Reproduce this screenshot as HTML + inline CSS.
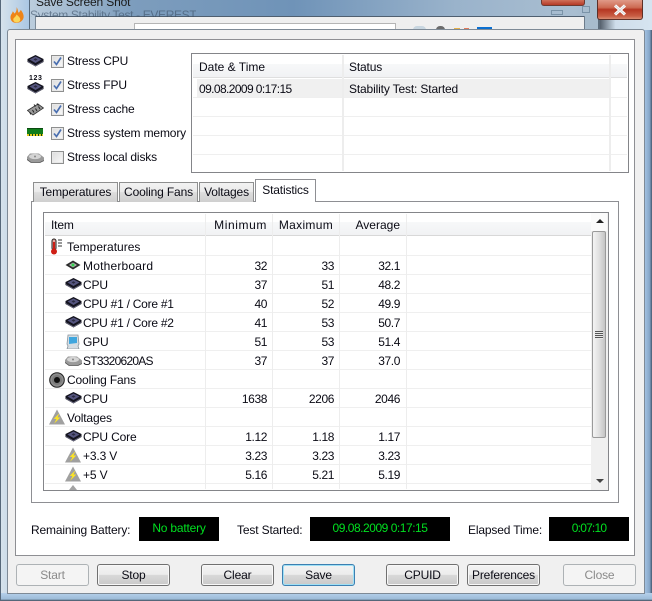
<!DOCTYPE html>
<html><head><meta charset="utf-8">
<style>
html,body{margin:0;padding:0;background:#000}
#r{position:relative;width:652px;height:601px;overflow:hidden;font-family:"Liberation Sans",sans-serif;font-size:12px;letter-spacing:-.15px;color:#0a0a14;background:#b9cfe4}
#r div,#r span.t,#r svg.i{position:absolute}
.t{white-space:nowrap;line-height:14px}
.r{text-align:right;letter-spacing:-.4px}
.hl{background:#f0f0f0}
.b{box-sizing:border-box;border:1px solid #707070;border-radius:3px;background:linear-gradient(#f3f3f3 0,#ececec 48%,#d9d9d9 50%,#c9c9c9 100%);text-align:center;line-height:20px;top:564px;height:22px;width:73px;box-shadow:inset 0 0 0 1px #f8f8f8}
.d{border-color:#adb2b5;background:#f4f4f4;color:#8a8a8a;box-shadow:none}
.tab{box-sizing:border-box;top:182px;height:20px;border:1px solid #8e8f8f;background:linear-gradient(#f2f2f2,#ebebeb 45%,#dddddd 50%,#cfcfcf);text-align:center;line-height:19px;border-bottom:0}
.blk{background:#000;color:#00e020;text-align:center;top:517px;height:24px;line-height:23px}
.cb{box-sizing:border-box;left:51px;width:13px;height:13px;border:1px solid #8e8f8f;background:linear-gradient(135deg,#dcdcdc,#fafafa);box-shadow:inset 0 0 0 1px #e8e8e8}
</style></head><body>
<div id="r">
<svg width="0" height="0" style="position:absolute"><defs>
<symbol id="cpu" viewBox="0 0 17 13"><path d="M8.500 1 16.500 5v3L8.500 12.500.5 8V5z" fill="#14141f"/><path d="M8.500 2.500 14.500 5.500 8.500 9 2.500 5.500z" fill="#55557f"/><path d="M6.500 5.500 8.500 4.300 10.500 5.500 8.500 6.800z" fill="#2a2a40"/><path d="M1 7.500l7.500 4.300L16 7.500" stroke="#75758f" fill="none" stroke-width=".7"/></symbol>
<symbol id="tri" viewBox="0 0 17 16"><path d="M8.500 0 17 16H0z" fill="#a0a0a0"/><path d="M11 4 5 10h3L5.500 15 12 8.500H9z" fill="#ffe620"/></symbol>
<symbol id="hdd" viewBox="0 0 17 10"><path d="M3 .5h9l5 4v2.500L13 9.500H4L0 6.500V4z" fill="#9a9a9a"/><ellipse cx="8" cy="3.500" rx="6" ry="2.600" fill="#d4d4d4"/><circle cx="8" cy="3.500" r="1" fill="#888"/><path d="M0 6.500l4 3h9l4-2" stroke="#555" fill="none" stroke-width=".8"/></symbol>
</defs></svg>

<!-- glass background -->
<div style="left:0;top:0;width:652px;height:30px;background:linear-gradient(90deg,#b9c9d8 0,#c2d2e0 3%,#7d9dbd 20%,#6f93b8 45%,#9ab3cb 70%,#a9bed1 88%,#9eb0c2 100%)"></div>
<div style="left:0;top:0;width:30px;height:601px;background:linear-gradient(90deg,#d7e3ec,#a9c6e3)"></div>
<div style="left:644px;top:0;width:8px;height:601px;background:linear-gradient(90deg,#a7c6e6,#85a6c8 70%,#44586e)"></div>
<div style="left:0;top:593px;width:652px;height:8px;background:linear-gradient(#b5d0ea,#9dbcd8 75%,#3d4b5a)"></div>
<div style="left:0;top:0;width:1px;height:601px;background:#56687a"></div>
<!-- back window -->
<div style="left:29px;top:0;width:1px;height:30px;background:#55697d"></div>
<div style="left:585px;top:0;width:13px;height:30px;background:#a7bccd"></div>
<div style="left:598px;top:0;width:2px;height:30px;background:#5c6d7c"></div>
<div style="left:600px;top:0;width:52px;height:30px;background:linear-gradient(90deg,#55606c,#cfdeeb 30%,#d6e4f0)"></div>
<div style="left:35px;top:16px;width:550px;height:14px;background:#efefef;border-top:1px solid #4f5f70;border-left:1px solid #7c8a98;box-sizing:border-box"></div>
<div style="left:584px;top:16px;width:1px;height:14px;background:#6d7c8b"></div>
<div style="left:134px;top:23px;width:262px;height:7px;background:#fff;border:1px solid #b5b5b5;border-bottom:0;box-sizing:border-box"></div>
<div style="left:413px;top:26px;width:13px;height:4px;background:#c8d6e0;border-radius:7px 7px 0 0"></div>
<div style="left:436px;top:26px;width:9px;height:4px;background:#6c6c6c;border-radius:5px 5px 0 0"></div>
<div style="left:454px;top:28px;width:6px;height:2px;background:#e5b04a"></div>
<div style="left:464px;top:28px;width:5px;height:2px;background:#e07a5a"></div>
<div style="left:477px;top:27px;width:15px;height:3px;background:#0b6fd0"></div>
<span class="t" style="left:36px;top:-5px;color:#1a1a1a">Save Screen Shot</span>
<span class="t" style="left:30px;top:8px;color:#3c5066;letter-spacing:-.35px;opacity:.6;height:9px;overflow:hidden">System Stability Test - EVEREST</span>
<!-- back window caption buttons -->
<div style="left:541px;top:0;width:44px;height:6px;background:linear-gradient(#d0705a,#b53a26);border:1px solid #6e3a30;border-top:0;border-radius:0 0 3px 3px;box-sizing:border-box"></div>
<div style="left:551px;top:10px;width:12px;height:5px;border:1px solid #7a93a8;box-sizing:border-box"></div>
<div style="left:582px;top:6px;width:8px;height:7px;border:1px solid #7a93a8;box-sizing:border-box"></div>
<!-- close button -->
<div style="left:597px;top:0;width:46px;height:20px;box-sizing:border-box;border:1px solid #5d3028;border-top:0;border-radius:0 0 3px 3px;background:linear-gradient(#e09a88 0,#cd6a52 40%,#b53622 50%,#c95e44 85%,#d98c72 100%)"></div>
<svg class="i" style="left:613px;top:4px" width="14" height="12" viewBox="0 0 14 12"><path d="M2 1.500 12 10.500M12 1.500 2 10.500" stroke="#fff" stroke-width="3"/><path d="M2 1.500 12 10.500M12 1.500 2 10.500" stroke="#d8d8d8" stroke-width="1"/></svg>
<!-- flame icon -->
<svg class="i" style="left:10px;top:7px" width="14" height="16" viewBox="0 0 15 17"><path d="M7 0C9 3 8 5 9.500 6 10.500 5 11 4 11.500 3 14 6 15 9 14.500 11.500 13.800 15 10.500 17 7 17 3 17 .5 14.500 .5 11 .5 8 2.500 7 3 4.500 4 5.500 4.500 6.500 5 7 6.500 5 7.500 3 7 0z" fill="#ee8418"/><path d="M7 8c2 2 4 3 4 5.500 0 2-2 3-4 3s-3.500-1.200-3.500-3C3.500 11.500 6 11 7 8z" fill="#fbd65a"/></svg>

<!-- dialog -->
<div style="left:7px;top:29px;width:638px;height:565px;box-sizing:border-box;background:#f0f0f0;border:1px solid #7e8a96;border-radius:3px 3px 0 0"></div>
<div style="left:15px;top:39px;width:620px;height:517px;box-sizing:border-box;background:#fff;border:1px solid #8e8f93"></div>

<!-- stress icons -->
<svg class="i" style="left:27px;top:54px" width="17" height="13"><use href="#cpu"/></svg>
<span class="t" style="left:29px;top:75px;font-size:7px;line-height:7px;letter-spacing:.6px;font-weight:bold">123</span>
<svg class="i" style="left:27px;top:81px" width="17" height="13"><use href="#cpu"/></svg>
<svg class="i" style="left:27px;top:103px" width="17" height="13" viewBox="0 0 17 13"><path d="M.5 7.500 11 1l5.500 4L6 12z" fill="#9a9a9a" stroke="#333" stroke-width=".8"/><path d="M2.500 9l1.500 2.500M5.500 7 7 9.500M8.500 5.500 10 8M11.500 3.500 13 6M7 1.500l1.500 2M10 .5l1.500 2" stroke="#222"/></svg>
<div style="left:27px;top:128px;width:16px;height:6px;background:#0f7d1a;border-top:1px solid #0a4a10;box-sizing:border-box"></div>
<div style="left:27px;top:134px;width:16px;height:2px;background:repeating-linear-gradient(90deg,#e2c81c 0 2px,#0a4a10 2px 3px)"></div>
<svg class="i" style="left:27px;top:153px" width="17" height="10"><use href="#hdd"/></svg>
<!-- checkboxes -->
<div class="cb" style="top:55px"></div><div class="cb" style="top:79px"></div><div class="cb" style="top:103px"></div><div class="cb" style="top:127px"></div><div class="cb" style="top:151px"></div>
<svg class="i" style="left:53px;top:57px" width="9" height="9" viewBox="0 0 9 9"><path d="M1 4.500 3.500 7.500 8 .5" stroke="#4a6fb0" stroke-width="1.700" fill="none"/></svg>
<svg class="i" style="left:53px;top:81px" width="9" height="9" viewBox="0 0 9 9"><path d="M1 4.500 3.500 7.500 8 .5" stroke="#4a6fb0" stroke-width="1.700" fill="none"/></svg>
<svg class="i" style="left:53px;top:105px" width="9" height="9" viewBox="0 0 9 9"><path d="M1 4.500 3.500 7.500 8 .5" stroke="#4a6fb0" stroke-width="1.700" fill="none"/></svg>
<svg class="i" style="left:53px;top:129px" width="9" height="9" viewBox="0 0 9 9"><path d="M1 4.500 3.500 7.500 8 .5" stroke="#4a6fb0" stroke-width="1.700" fill="none"/></svg>
<span class="t" style="left:67px;top:54px">Stress CPU</span>
<span class="t" style="left:67px;top:78px">Stress FPU</span>
<span class="t" style="left:67px;top:102px">Stress cache</span>
<span class="t" style="left:67px;top:126px">Stress system memory</span>
<span class="t" style="left:67px;top:150px">Stress local disks</span>

<!-- log table -->
<div style="left:191px;top:53px;width:438px;height:120px;box-sizing:border-box;border:1px solid #848589;background:#fff"></div>
<div style="left:193px;top:64px;width:434px;height:13px;background:linear-gradient(#f7f8f9,#f1f2f4)"></div>
<div style="left:193px;top:77px;width:434px;height:1px;background:#dfdfdf"></div>
<div class="hl" style="left:197px;top:79px;width:413px;height:19px"></div>
<div style="left:193px;top:97px;width:434px;height:1px;background:#efefef"></div>
<div style="left:193px;top:116px;width:434px;height:1px;background:#efefef"></div>
<div style="left:193px;top:135px;width:434px;height:1px;background:#efefef"></div>
<div style="left:193px;top:154px;width:434px;height:1px;background:#efefef"></div>
<div style="left:342px;top:55px;width:2px;height:116px;background:#ededed"></div>
<div style="left:609px;top:55px;width:2px;height:116px;background:#ededed"></div>
<span class="t" style="left:199px;top:60px;letter-spacing:0">Date &amp; Time</span>
<span class="t" style="left:349px;top:60px">Status</span>
<span class="t" style="left:199px;top:82px;letter-spacing:-.6px">09.08.2009 0:17:15</span>
<span class="t" style="left:349px;top:82px">Stability Test: Started</span>

<!-- tabs -->
<div style="left:31px;top:201px;width:588px;height:302px;box-sizing:border-box;border:1px solid #8e8f93;background:#fff"></div>
<div class="tab" style="left:33px;width:85px">Temperatures</div>
<div class="tab" style="left:119px;width:79px">Cooling Fans</div>
<div class="tab" style="left:199px;width:55px">Voltages</div>
<div style="left:255px;top:179px;width:61px;height:23px;box-sizing:border-box;border:1px solid #8e8f93;border-bottom:0;background:#fff;text-align:center;line-height:20px">Statistics</div>

<!-- list -->
<div style="left:43px;top:212px;width:566px;height:279px;box-sizing:border-box;border:1px solid #848589;background:#fff"></div>
<div style="left:45px;top:222px;width:546px;height:13px;background:linear-gradient(#f7f8f9,#f1f2f4)"></div>
<div style="left:45px;top:235px;width:546px;height:1px;background:#d8d8d8"></div>
<div style="left:45px;top:255px;width:546px;height:1px;background:#efefef"></div>
<div style="left:45px;top:274px;width:546px;height:1px;background:#efefef"></div>
<div style="left:45px;top:293px;width:546px;height:1px;background:#efefef"></div>
<div style="left:45px;top:312px;width:546px;height:1px;background:#efefef"></div>
<div style="left:45px;top:331px;width:546px;height:1px;background:#efefef"></div>
<div style="left:45px;top:350px;width:546px;height:1px;background:#efefef"></div>
<div style="left:45px;top:369px;width:546px;height:1px;background:#efefef"></div>
<div style="left:45px;top:388px;width:546px;height:1px;background:#efefef"></div>
<div style="left:45px;top:407px;width:546px;height:1px;background:#efefef"></div>
<div style="left:45px;top:426px;width:546px;height:1px;background:#efefef"></div>
<div style="left:45px;top:445px;width:546px;height:1px;background:#efefef"></div>
<div style="left:45px;top:464px;width:546px;height:1px;background:#efefef"></div>
<div style="left:45px;top:483px;width:546px;height:1px;background:#efefef"></div>
<div style="left:205px;top:214px;width:1px;height:275px;background:#ededed"></div>
<div style="left:272px;top:214px;width:1px;height:275px;background:#ededed"></div>
<div style="left:339px;top:214px;width:1px;height:275px;background:#ededed"></div>
<div style="left:406px;top:214px;width:1px;height:275px;background:#ededed"></div>

<span class="t" style="left:51px;top:218px">Item</span>
<span class="t r" style="right:385px;top:218px;letter-spacing:.6px">Minimum</span>
<span class="t r" style="right:319px;top:218px;letter-spacing:.3px">Maximum</span>
<span class="t r" style="right:252px;top:218px;letter-spacing:0">Average</span>

<!-- list icons -->
<svg class="i" style="left:50px;top:238px" width="13" height="17" viewBox="0 0 13 17"><rect x="2" y="1" width="4" height="11" rx="2" fill="#e8a8a0" stroke="#222"/><rect x="3" y="4" width="2" height="8" fill="#cf1f16"/><circle cx="4" cy="13.500" r="3" fill="#cf1f16"/><path d="M8 2h4M8 5h4M8 8h4" stroke="#333"/></svg>
<svg class="i" style="left:65px;top:260px" width="16" height="10" viewBox="0 0 16 10"><path d="M8 .5 15.500 5 8 9.500 .5 5z" fill="#2c2c2c"/><path d="M8 2.500 12 5 8 7.500 4 5z" fill="#b5b5b5"/><circle cx="8" cy="5" r="1.500" fill="#2fd04a"/></svg>
<svg class="i" style="left:65px;top:277px" width="17" height="13"><use href="#cpu"/></svg>
<svg class="i" style="left:65px;top:296px" width="17" height="13"><use href="#cpu"/></svg>
<svg class="i" style="left:65px;top:315px" width="17" height="13"><use href="#cpu"/></svg>
<svg class="i" style="left:66px;top:334px" width="14" height="15" viewBox="0 0 14 15"><path d="M2 1h10l1 9-1 2 1 3H1l1-3-1-2z" fill="#d5dde3" stroke="#8a949c" stroke-width=".8"/><path d="M3 3h8v6l-8 1z" fill="#3fa6de"/></svg>
<svg class="i" style="left:65px;top:356px" width="17" height="10"><use href="#hdd"/></svg>
<svg class="i" style="left:49px;top:372px" width="16" height="16" viewBox="0 0 16 16"><circle cx="8" cy="8" r="7.300" fill="#8c8c8c" stroke="#222"/><circle cx="8" cy="8" r="5" fill="#7a7a7a"/><circle cx="8" cy="8" r="3" fill="#0e0e0e"/></svg>
<svg class="i" style="left:49px;top:409px" width="16" height="16"><use href="#tri"/></svg>
<svg class="i" style="left:65px;top:391px" width="17" height="13"><use href="#cpu"/></svg>
<svg class="i" style="left:65px;top:429px" width="17" height="13"><use href="#cpu"/></svg>
<svg class="i" style="left:65px;top:447px" width="16" height="16"><use href="#tri"/></svg>
<svg class="i" style="left:65px;top:466px" width="16" height="16"><use href="#tri"/></svg>
<svg class="i" style="left:69px;top:485px" width="8" height="5" viewBox="0 0 8 5"><path d="M4 0 8 5H0z" fill="#a3a3a3"/></svg>

<!-- list text -->
<span class="t" style="left:67px;top:240px;letter-spacing:0">Temperatures</span>
<span class="t" style="left:83px;top:259px;letter-spacing:.2px">Motherboard</span>
<span class="t" style="left:83px;top:278px">CPU</span>
<span class="t" style="left:83px;top:297px;letter-spacing:-.25px">CPU #1 / Core #1</span>
<span class="t" style="left:83px;top:316px;letter-spacing:-.25px">CPU #1 / Core #2</span>
<span class="t" style="left:83px;top:335px">GPU</span>
<span class="t" style="left:83px;top:354px;letter-spacing:-.75px">ST3320620AS</span>
<span class="t" style="left:67px;top:373px">Cooling Fans</span>
<span class="t" style="left:83px;top:392px">CPU</span>
<span class="t" style="left:67px;top:411px">Voltages</span>
<span class="t" style="left:83px;top:430px">CPU Core</span>
<span class="t" style="left:83px;top:449px">+3.3 V</span>
<span class="t" style="left:83px;top:468px">+5 V</span>

<span class="t r" style="right:385px;top:259px">32</span><span class="t r" style="right:318px;top:259px">33</span><span class="t r" style="right:252px;top:259px">32.1</span>
<span class="t r" style="right:385px;top:278px">37</span><span class="t r" style="right:318px;top:278px">51</span><span class="t r" style="right:252px;top:278px">48.2</span>
<span class="t r" style="right:385px;top:297px">40</span><span class="t r" style="right:318px;top:297px">52</span><span class="t r" style="right:252px;top:297px">49.9</span>
<span class="t r" style="right:385px;top:316px">41</span><span class="t r" style="right:318px;top:316px">53</span><span class="t r" style="right:252px;top:316px">50.7</span>
<span class="t r" style="right:385px;top:335px">51</span><span class="t r" style="right:318px;top:335px">53</span><span class="t r" style="right:252px;top:335px">51.4</span>
<span class="t r" style="right:385px;top:354px">37</span><span class="t r" style="right:318px;top:354px">37</span><span class="t r" style="right:252px;top:354px">37.0</span>
<span class="t r" style="right:385px;top:392px">1638</span><span class="t r" style="right:318px;top:392px">2206</span><span class="t r" style="right:252px;top:392px">2046</span>
<span class="t r" style="right:385px;top:430px">1.12</span><span class="t r" style="right:318px;top:430px">1.18</span><span class="t r" style="right:252px;top:430px">1.17</span>
<span class="t r" style="right:385px;top:449px">3.23</span><span class="t r" style="right:318px;top:449px">3.23</span><span class="t r" style="right:252px;top:449px">3.23</span>
<span class="t r" style="right:385px;top:468px">5.16</span><span class="t r" style="right:318px;top:468px">5.21</span><span class="t r" style="right:252px;top:468px">5.19</span>

<!-- scrollbar -->
<div style="left:591px;top:213px;width:17px;height:277px;background:#f0f0f0"></div>
<div style="left:591px;top:213px;width:16px;height:18px;background:#fbfbfb"></div>
<div style="left:596px;top:219px;width:0;height:0;border:4px solid transparent;border-top:0;border-bottom:4px solid #222"></div>
<div style="left:592px;top:231px;width:14px;height:207px;box-sizing:border-box;border:1px solid #9a9a9a;border-radius:2px;background:linear-gradient(90deg,#f4f4f4,#e0e0e0 50%,#c4c4c4)"></div>
<div style="left:595px;top:331px;width:8px;height:8px;background:repeating-linear-gradient(#555 0 1px,#e8e8e8 1px 2px)"></div>
<div style="left:596px;top:479px;width:0;height:0;border:4px solid transparent;border-bottom:0;border-top:4px solid #444"></div>

<!-- status -->
<span class="t" style="left:31px;top:523px">Remaining Battery:</span>
<div class="blk" style="left:139px;width:80px;letter-spacing:-.2px">No battery</div>
<span class="t" style="left:237px;top:523px">Test Started:</span>
<div class="blk" style="left:310px;width:140px;letter-spacing:-.47px">09.08.2009 0:17:15</div>
<span class="t" style="left:468px;top:523px">Elapsed Time:</span>
<div class="blk" style="left:549px;width:80px;letter-spacing:-.8px">0:07:10</div>

<!-- buttons -->
<div class="b d" style="left:16px">Start</div>
<div class="b" style="left:97px">Stop</div>
<div class="b" style="left:201px">Clear</div>
<div class="b" style="left:282px;border-color:#3c7fb1;box-shadow:inset 0 0 0 1px #9fe0f5">Save</div>
<div class="b" style="left:386px">CPUID</div>
<div class="b" style="left:467px">Preferences</div>
<div class="b d" style="left:563px">Close</div>
</div>
</body></html>
